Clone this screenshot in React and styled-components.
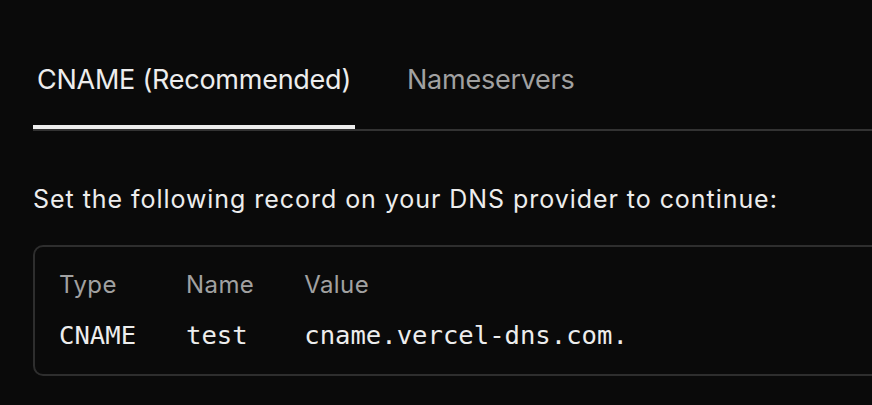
import React from "react";
import styled, { createGlobalStyle } from "styled-components";

const Global = createGlobalStyle`
  html, body {
    margin: 0;
    padding: 0;
    background: #0a0a0a;
    overflow: hidden;
  }
  body {
    font-family: Inter, "Noto Sans", sans-serif;
    color: #ededed;
  }
`;

const Page = styled.div`
  width: 1000px;
  padding: 64px 0 0 33px;
  box-sizing: border-box;
  min-height: 405px;
  background: #0a0a0a;
`;

const Tabs = styled.div`
  display: flex;
  gap: 48px;
  border-bottom: 2px solid #333333;
`;

const Tab = styled.button`
  all: unset;
  cursor: pointer;
  padding: 0 4px 29px;
  font-family: Inter, "Noto Sans", sans-serif;
  font-size: 27px;
  line-height: 32px;
  letter-spacing: -0.25px;
  color: ${(p) => (p.$active ? "#ededed" : "#a1a1a1")};
  border-bottom: 4px solid ${(p) => (p.$active ? "#ededed" : "transparent")};
`;

const Description = styled.p`
  margin: 52px 0 0;
  font-size: 25px;
  line-height: 32px;
  letter-spacing: 0.95px;
  color: #ededed;
`;

const RecordBox = styled.div`
  margin-top: 30px;
  border: 2px solid #2e2e2e;
  border-radius: 10px;
  padding: 23px 24px 24px;
  display: grid;
  grid-template-columns: auto auto 1fr;
  column-gap: 50px;
  row-gap: 20px;
`;

const HeadCell = styled.div`
  font-size: 24px;
  line-height: 30px;
  letter-spacing: 0.4px;
  color: #a1a1a1;
`;

const ValueCell = styled.div`
  font-family: "DejaVu Sans Mono", "Liberation Mono", monospace;
  font-size: 25.6px;
  line-height: 30px;
  color: #ededed;
`;

export default function App() {
  return (
    <>
      <Global />
      <Page>
        <Tabs>
          <Tab $active>CNAME (Recommended)</Tab>
          <Tab>Nameservers</Tab>
        </Tabs>
        <Description>Set the following record on your DNS provider to continue:</Description>
        <RecordBox>
          <HeadCell>Type</HeadCell>
          <HeadCell>Name</HeadCell>
          <HeadCell>Value</HeadCell>
          <ValueCell>CNAME</ValueCell>
          <ValueCell>test</ValueCell>
          <ValueCell>cname.vercel-dns.com.</ValueCell>
        </RecordBox>
      </Page>
    </>
  );
}
